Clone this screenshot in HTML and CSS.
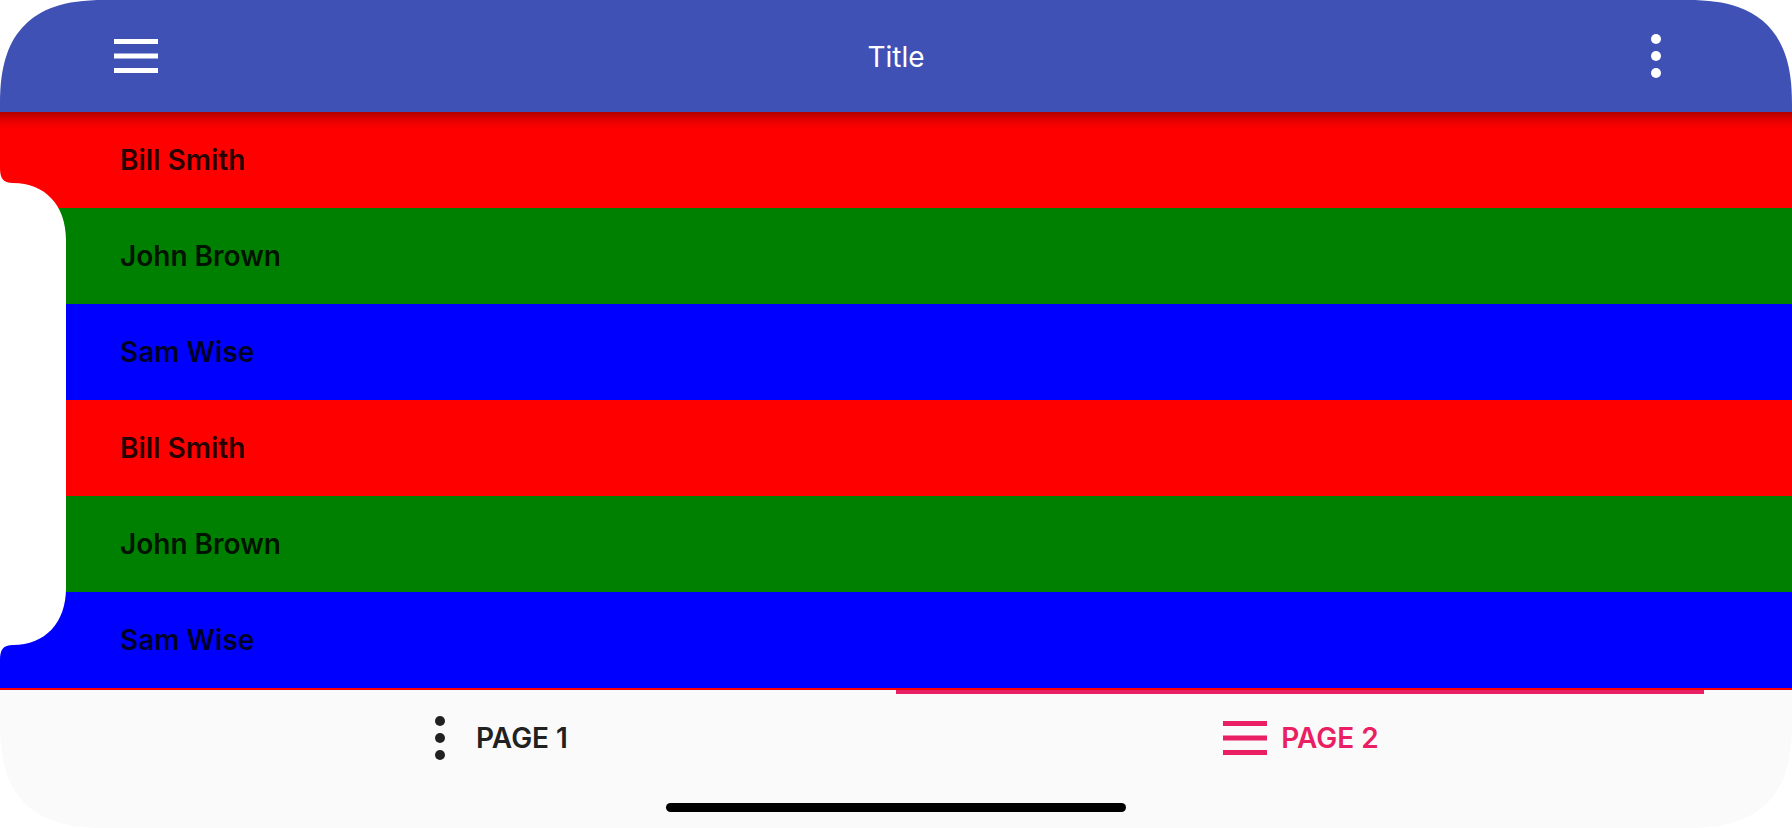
FILE: index.html
```html
<!DOCTYPE html>
<html lang="en">
<head>
<meta charset="utf-8">
<meta name="viewport" content="width=device-width, initial-scale=1">
<title>Title</title>
<link rel="stylesheet" href="styles.css">
</head>
<body>
<svg class="sprite" aria-hidden="true">
  <symbol id="menu" viewBox="0 0 56 56">
    <path d="M6 11h44v5H6zM6 25.500h44v5H6zM6 40h44v5H6z"/>
  </symbol>
  <symbol id="more" viewBox="0 0 56 56">
    <circle cx="28" cy="11" r="5"/><circle cx="28" cy="28" r="5"/><circle cx="28" cy="45" r="5"/>
  </symbol>
  <symbol id="corner" viewBox="0 0 104 104">
    <path d="M0 0H104C84 0 68 2 54 7C31 15 15 31 7 54C2 68 0 84 0 104Z"/>
  </symbol>
</svg>
<div class="screen">
  <header class="toolbar">
    <button class="icon-button" type="button" aria-label="Menu"><svg class="icon"><use href="#menu"/></svg></button>
    <h1 class="toolbar-title">Title</h1>
    <button class="icon-button" type="button" aria-label="More"><svg class="icon"><use href="#more"/></svg></button>
  </header>
  <main class="content">
    <ul class="people">
      <li class="person red">Bill Smith</li>
      <li class="person green">John Brown</li>
      <li class="person blue">Sam Wise</li>
      <li class="person red">Bill Smith</li>
      <li class="person green">John Brown</li>
      <li class="person blue">Sam Wise</li>
    </ul>
  </main>
  <nav class="tabs">
    <button class="tab" type="button"><svg class="icon" aria-hidden="true"><use href="#more"/></svg>PAGE 1</button>
    <button class="tab active" type="button" aria-current="page"><svg class="icon" aria-hidden="true"><use href="#menu"/></svg>PAGE 2</button>
  </nav>
  <div class="home-indicator"></div>
  <div class="bezel" aria-hidden="true">
    <svg class="corner top-left"><use href="#corner"/></svg>
    <svg class="corner top-right"><use href="#corner"/></svg>
    <svg class="corner bottom-left"><use href="#corner"/></svg>
    <svg class="corner bottom-right"><use href="#corner"/></svg>
    <svg class="notch" viewBox="0 0 66 492"><path d="M0 0C0 10 3 15 13 15C45 15 66 37 66 72V420C66 455 45 477 13 477C3 477 0 482 0 492Z"/></svg>
  </div>
</div>
</body>
</html>
```

FILE: styles.css
```css
* {
  box-sizing: border-box;
}

body {
  margin: 0;
  background: #fff;
  font-family: Inter, "Liberation Sans", sans-serif;
  font-size: 28px;
  line-height: 40px;
}

button {
  border: 0;
  padding: 0;
  background: none;
  color: inherit;
  font: inherit;
}

.sprite {
  position: absolute;
  width: 0;
  height: 0;
}

.screen {
  position: relative;
  display: flex;
  flex-direction: column;
  min-height: 100vh;
  background: #fafafa;
  overflow: hidden;
}

.toolbar {
  position: relative;
  z-index: 1;
  display: flex;
  align-items: center;
  justify-content: space-between;
  padding: 28px 108px;
  background: #3f51b5;
  color: #fff;
}

.toolbar::after {
  content: "";
  position: absolute;
  top: 100%;
  left: 0;
  right: 0;
  height: 18px;
  background: linear-gradient(rgba(0, 0, 0, 0.3), rgba(0, 0, 0, 0.12) 40%, rgba(0, 0, 0, 0.03) 75%, transparent);
  pointer-events: none;
}

.toolbar-title {
  margin: 0;
  padding-top: 2px;
  font-size: 28px;
  font-weight: 400;
}

.icon-button {
  display: flex;
}

.icon {
  width: 56px;
  height: 56px;
  fill: currentColor;
}

.content {
  flex: 1;
  background: #f00;
}

.people {
  margin: 0;
  padding: 0;
  list-style: none;
}

.person {
  padding: 28px 120px;
  color: rgba(0, 0, 0, 0.87);
  font-weight: 600;
}

.red {
  background: #f00;
}

.green {
  background: #008000;
}

.blue {
  background: #00f;
}

.tabs {
  display: grid;
  grid-template-columns: 1fr 1fr;
  padding: 0 88px 42px;
}

.tab {
  display: flex;
  align-items: center;
  justify-content: center;
  gap: 8px;
  height: 96px;
  padding-right: 4px;
  border-top: 4px solid transparent;
  border-bottom: 4px solid transparent;
  color: #212121;
  font-weight: 600;
}

.tab.active {
  border-top-color: #e91e63;
  color: #e91e63;
}

.home-indicator {
  position: absolute;
  bottom: 16px;
  left: 50%;
  width: 460px;
  height: 9px;
  margin-left: -230px;
  border-radius: 5px;
  background: #000;
}

.bezel {
  position: absolute;
  inset: 0;
  z-index: 2;
  display: flex;
  align-items: center;
  fill: #fff;
  pointer-events: none;
}

.corner {
  position: absolute;
  width: 104px;
  height: 104px;
}

.top-left {
  top: 0;
  left: 0;
}

.top-right {
  top: 0;
  right: 0;
  transform: scaleX(-1);
}

.bottom-left {
  bottom: 0;
  left: 0;
  transform: scaleY(-1);
}

.bottom-right {
  right: 0;
  bottom: 0;
  transform: scale(-1);
}

.notch {
  width: 66px;
  height: 492px;
}
```
